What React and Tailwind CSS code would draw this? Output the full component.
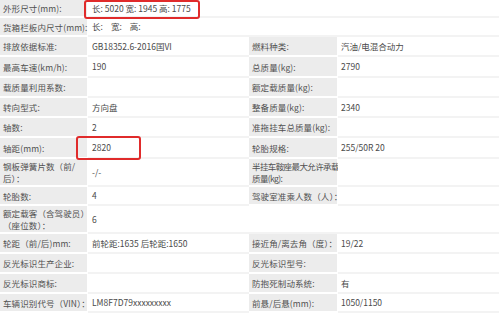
import React from "react";

const rows = [
  { h: 18, l1: "外形尺寸(mm):", full: "长: 5020 宽: 1945 高: 1775" },
  { h: 19, l1: "货箱栏板内尺寸(mm):", full: "dims" },
  { h: 20, l1: "排放依据标准:", v1: "GB18352.6-2016国VI", l2: "燃料种类:", v2: "汽油/电混合动力" },
  { h: 21, l1: "最高车速(km/h):", v1: "190", l2: "总质量(kg):", v2: "2790" },
  { h: 20, l1: "载质量利用系数:", v1: "", l2: "额定载质量(kg):", v2: "" },
  { h: 20, l1: "转向型式:", v1: "方向盘", l2: "整备质量(kg):", v2: "2340" },
  { h: 20, l1: "轴数:", v1: "2", l2: "准拖挂车总质量(kg):", v2: "" },
  { h: 21, l1: "轴距(mm):", v1: "2820", l2: "轮胎规格:", v2: "255/50R 20" },
  { h: 28, l1: ["钢板弹簧片数（前/", "后）："], v1: "-/-", l2: ["半挂车鞍座最大允许承载", "质量(kg):"], tight2: true, v2: "" },
  { h: 19, l1: "轮胎数:", v1: "4", l2: "驾驶室准乘人数（人）：", v2: "" },
  { h: 28, l1: ["额定载客（含驾驶员）", "（座位数）："], v1: "6", empty2: true },
  { h: 20, l1: "轮距（前/后)mm:", v1: "前轮距:1635 后轮距:1650", l2: "接近角/离去角（度）：", v2: "19/22" },
  { h: 20, l1: "反光标识生产企业:", v1: "", l2: "反光标识型号:", v2: "" },
  { h: 20, l1: "反光标识商标:", v1: "", l2: "防抱死制动系统:", v2: "有" },
  { h: 19, l1: "车辆识别代号（VIN）：", v1: "LM8F7D79xxxxxxxxx", l2: "前悬/后悬(mm):", v2: "1050/1150" },
];

function Label({ text, w, tight }) {
  const lines = Array.isArray(text) ? text : [text];
  return (
    <div
      className={`${w} shrink-0 bg-[#ececec] border-b-2 border-r border-white pl-[3px] flex flex-col justify-center text-[8.5px] leading-[12px] text-[#505050] ${tight ? "tracking-[-0.6px]" : "tracking-[0.1px]"}`}
    >
      {lines.map((t, i) => (
        <span key={i} className="whitespace-nowrap">{t}</span>
      ))}
    </div>
  );
}

function Value({ text, w, pl }) {
  return (
    <div className={`${w} shrink-0 bg-white border-b-2 border-[#f3f3f3] ${pl} flex items-center whitespace-nowrap`}>
      {text}
    </div>
  );
}

export default function App() {
  return (
    <div
      className="relative w-[499px] h-[313px] overflow-hidden bg-white text-[8.5px] text-[#4a4a4a] flex flex-col"
      style={{ fontFamily: "'Noto Sans CJK SC', 'Noto Sans', sans-serif" }}
    >
      {rows.map((r, i) => (
        <div key={i} className="flex shrink-0" style={{ height: r.h }}>
          <Label text={r.l1} w="w-[88px]" />
          {r.full ? (
            <div className="flex-1 bg-white border-b-2 border-[#f3f3f3] pl-[4px] flex items-center whitespace-nowrap">
              {r.full === "dims" ? (
                <span className="flex gap-[8px]">
                  <span>长:</span>
                  <span>宽:</span>
                  <span>高:</span>
                </span>
              ) : (
                r.full
              )}
            </div>
          ) : (
            <>
              <Value text={r.v1} w="w-[161px]" pl="pl-[4px]" />
              {r.empty2 ? (
                <div className="flex-1 bg-white border-b-2 border-[#f3f3f3]" />
              ) : (
                <>
                  <Label text={r.l2} w="w-[89px]" tight={r.tight2} />
                  <Value text={r.v2} w="flex-1" pl="pl-[3px]" />
                </>
              )}
            </>
          )}
        </div>
      ))}
      <div className="absolute left-[84px] top-0 w-[116px] h-[19px] border-2 border-[#e02b2b] rounded-[3px]" />
      <div className="absolute left-[76px] top-[136px] w-[65px] h-[24px] border-2 border-[#e02b2b] rounded-[3px]" />
    </div>
  );
}
